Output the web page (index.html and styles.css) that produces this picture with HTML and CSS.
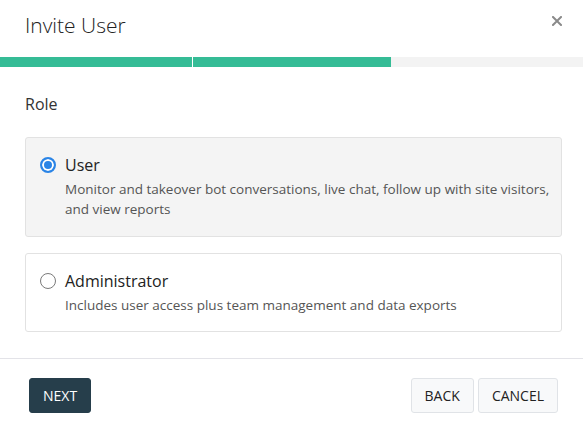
FILE: index.html
```html
<!DOCTYPE html>
<html>
<head>
<meta charset="utf-8">
<link rel="stylesheet" href="styles.css">
</head>
<body>
<div class="modal">
  <div class="header">
    <h1 class="title">Invite User</h1>
    <button class="close" aria-label="Close">
      <svg width="10" height="10" viewBox="0 0 10 10"><path d="M1 1L9 9M9 1L1 9" stroke="#8a8a8a" stroke-width="2" stroke-linecap="square"/></svg>
    </button>
  </div>
  <div class="progress">
    <div class="seg seg1"></div>
    <div class="seg seg2"></div>
    <div class="seg rest"></div>
  </div>
  <div class="body">
    <div class="label">Role</div>
    <label class="card selected">
      <span class="radio checked"></span>
      <span class="card-text">
        <span class="card-title">User</span>
        <span class="card-desc">Monitor and takeover bot conversations, live chat, follow up with site visitors, and view reports</span>
      </span>
    </label>
    <label class="card">
      <span class="radio"></span>
      <span class="card-text">
        <span class="card-title">Administrator</span>
        <span class="card-desc">Includes user access plus team management and data exports</span>
      </span>
    </label>
  </div>
  <div class="footer">
    <button class="btn primary">NEXT</button>
    <div class="right">
      <button class="btn light">BACK</button>
      <button class="btn light">CANCEL</button>
    </div>
  </div>
</div>
</body>
</html>
```
FILE: styles.css
```css
* { box-sizing: border-box; }
html, body { margin: 0; padding: 0; background: #fff; }
body { font-family: "Open Sans", "Noto Sans", sans-serif; color: #333; }
.modal { width: 583px; }
.header {
  display: flex;
  justify-content: space-between;
  align-items: flex-start;
  padding: 11px 21px 0 25px;
  height: 57px;
}
.title {
  margin: 0;
  font-size: 21px;
  font-weight: 300;
  line-height: 28px;
  color: #222;
}
.close {
  border: 0;
  background: none;
  padding: 0;
  margin-top: 5px;
  width: 10px;
  height: 10px;
  display: flex;
}
.progress { display: flex; height: 10px; gap: 1px; background: #fff; }
.seg1 { width: 192px; background: #35bc96; }
.seg2 { width: 198px; background: #35bc96; margin-right: -1px; }
.rest { flex: 1; background: #f3f3f3; }
.body { padding: 26px 21px 0 25px; }
.label { font-size: 16px; line-height: 22px; color: #333; margin-bottom: 22px; }
.card {
  display: flex;
  align-items: flex-start;
  gap: 9px;
  border: 1px solid #e2e2e2;
  border-radius: 3px;
  padding: 15px 8px 17px 14px;
  background: #fff;
  margin-bottom: 16px;
}
.card.selected { background: #f4f4f4; }
.radio {
  flex: none;
  width: 16px;
  height: 16px;
  border-radius: 50%;
  border: 1px solid #7a7a7a;
  background: #fff;
  margin-top: 4px;
}
.radio.checked {
  border: 2px solid #2a84e6;
  background: #2a84e6;
  box-shadow: inset 0 0 0 2px #fff;
}
.card-text { display: flex; flex-direction: column; }
.card-title { font-size: 16px; line-height: 24px; color: #222; }
.card-desc { font-size: 13.5px; line-height: 20px; color: #555; margin-top: 2px; }
.body .card:last-child { margin-bottom: 0; padding-bottom: 16px; }
.footer {
  margin-top: 26px;
  border-top: 1px solid #e3e3e8;
  padding: 19px 25px 0 29px;
  display: flex;
  justify-content: space-between;
}
.right { display: flex; gap: 4px; }
.btn {
  font-family: "Open Sans", "Noto Sans", sans-serif;
  font-size: 14px;
  height: 35px;
  padding: 0 13px;
  border-radius: 3px;
  cursor: pointer;
}
.primary { background: #263e4b; color: #fff; border: 1px solid #263e4b; }
.light { background: #f8f9fa; color: #222; border: 1px solid #e0e3e7; }
```
